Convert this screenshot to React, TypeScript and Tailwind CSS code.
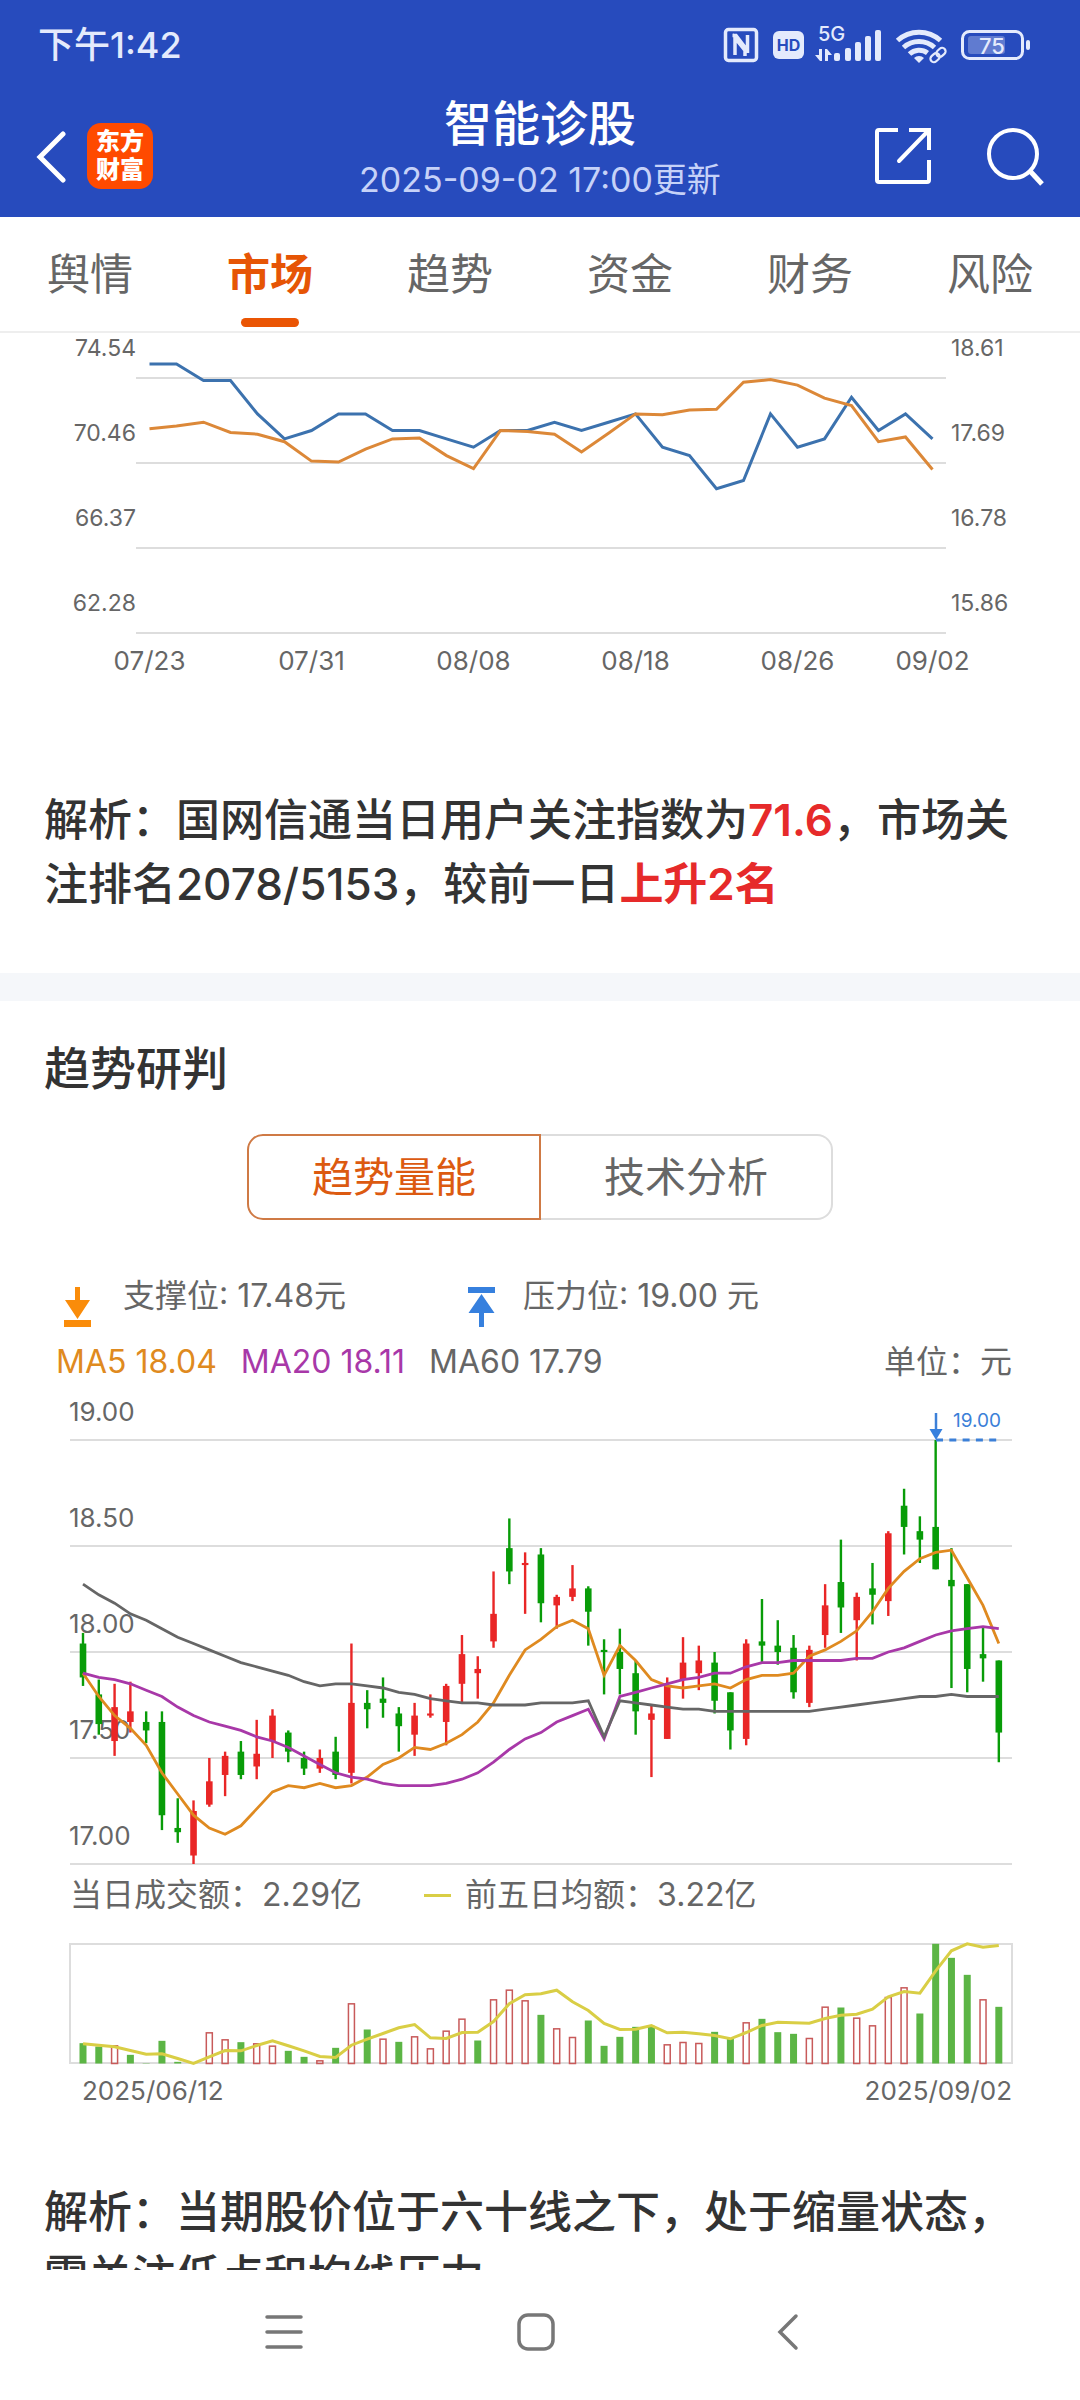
import type { ReactNode } from 'react';

const tabs = ['舆情', '市场', '趋势', '资金', '财务', '风险'];

// Attention index (left axis) against closing price (right axis)
const attention = [
  75.2, 75.2, 74.4, 74.4, 72.8, 71.6, 72, 72.8, 72.8, 72, 72, 71.6, 71.2, 72, 72, 72.4, 72, 72.4,
  72.8, 71.2, 70.8, 69.2, 69.6, 72.8, 71.2, 71.6, 73.6, 72, 72.8, 71.6,
];
const closes = [
  18.06, 18.09, 18.13, 18.02, 18, 17.92, 17.71, 17.7, 17.84, 17.95, 17.96, 17.77, 17.63, 18.04,
  18.03, 18, 17.81, 18.01, 18.22, 18.21, 18.26, 18.27, 18.56, 18.59, 18.53, 18.39, 18.31, 17.92,
  17.97, 17.62,
];
const attentionRows = [
  { y: 44, left: '74.54', right: '18.61' },
  { y: 129, left: '70.46', right: '17.69' },
  { y: 214, left: '66.37', right: '16.78' },
  { y: 299, left: '62.28', right: '15.86' },
];
const attentionDates = [
  { i: 0, label: '07/23' },
  { i: 6, label: '07/31' },
  { i: 12, label: '08/08' },
  { i: 18, label: '08/18' },
  { i: 24, label: '08/26' },
  { i: 29, label: '09/02' },
];

// direction (1 up, 0 down), high, body top, body bottom, low; prices in cents
const candles = [
  [0, 1809, 1804, 1788, 1784], [0, 1787, 1780, 1766, 1761], [1, 1785, 1774, 1758, 1751],
  [1, 1786, 1772, 1767, 1762], [0, 1772, 1767, 1763, 1757], [0, 1772, 1767, 1723, 1716],
  [0, 1731, 1717, 1715, 1710], [1, 1730, 1725, 1704, 1700], [1, 1750, 1739, 1728, 1727],
  [1, 1753, 1751, 1742, 1732], [0, 1758, 1753, 1742, 1740], [1, 1768, 1752, 1746, 1740],
  [1, 1773, 1770, 1758, 1750], [0, 1763, 1762, 1753, 1748], [0, 1753, 1750, 1745, 1742],
  [1, 1754, 1750, 1745, 1743], [0, 1760, 1753, 1742, 1740], [1, 1804, 1776, 1743, 1738],
  [0, 1782, 1776, 1773, 1764], [0, 1788, 1778, 1776, 1769], [0, 1774, 1771, 1765, 1753],
  [1, 1776, 1770, 1761, 1751], [1, 1780, 1771, 1770, 1769], [1, 1785, 1784, 1767, 1756],
  [1, 1808, 1799, 1785, 1776], [1, 1798, 1792, 1790, 1778], [1, 1838, 1818, 1805, 1802],
  [0, 1863, 1849, 1838, 1832], [1, 1847, 1842, 1841, 1818], [0, 1849, 1846, 1823, 1814],
  [1, 1827, 1826, 1822, 1811], [1, 1841, 1830, 1826, 1824], [0, 1831, 1830, 1819, 1803],
  [0, 1806, 1801, 1800, 1780], [0, 1811, 1800, 1792, 1780], [0, 1796, 1790, 1772, 1761],
  [1, 1775, 1771, 1768, 1741], [1, 1788, 1784, 1759, 1759], [1, 1807, 1795, 1787, 1778],
  [1, 1803, 1796, 1790, 1782], [0, 1800, 1795, 1777, 1771], [0, 1781, 1781, 1763, 1754],
  [1, 1806, 1804, 1759, 1756], [0, 1825, 1805, 1803, 1795], [0, 1815, 1803, 1800, 1794],
  [0, 1808, 1802, 1781, 1778], [1, 1803, 1801, 1776, 1774], [1, 1832, 1822, 1808, 1802],
  [0, 1853, 1833, 1821, 1809], [1, 1828, 1826, 1815, 1796], [0, 1842, 1830, 1827, 1813],
  [1, 1857, 1856, 1824, 1817], [0, 1877, 1869, 1859, 1846], [0, 1864, 1857, 1853, 1842],
  [0, 1900, 1859, 1839, 1839], [0, 1849, 1834, 1831, 1783], [0, 1832, 1832, 1792, 1781],
  [0, 1812, 1799, 1797, 1786], [0, 1796, 1796, 1762, 1748],
];
const ma5 = [
  1790, 1779, 1770, 1764, 1756, 1743, 1733, 1723, 1717, 1714, 1718, 1726, 1734, 1737, 1736, 1738,
  1736, 1737, 1741, 1747, 1750, 1755, 1754, 1757, 1761, 1767, 1776, 1789, 1801, 1806, 1812, 1815,
  1811, 1789, 1803, 1796, 1787, 1784, 1783, 1784, 1785, 1783, 1787, 1789, 1789, 1790, 1798, 1801,
  1805, 1810, 1819, 1830, 1838, 1844, 1847, 1848, 1835, 1822, 1804,
];
const ma20 = [
  1790, 1788, 1787, 1785, 1782, 1779, 1774, 1770, 1767, 1765, 1763, 1760, 1758, 1755, 1751, 1747,
  1743, 1741, 1740, 1738, 1737, 1737, 1737, 1738, 1740, 1743, 1748, 1754, 1759, 1762, 1767, 1770,
  1773, 1759, 1779, 1781, 1783, 1785, 1787, 1788, 1790, 1790, 1793, 1795, 1795, 1796, 1796, 1796,
  1796, 1797, 1797, 1800, 1802, 1805, 1808, 1810, 1811, 1812, 1811,
];
const ma60 = [
  1832, 1827, 1823, 1818, 1815, 1811, 1807, 1804, 1801, 1798, 1795, 1793, 1791, 1789, 1786, 1784,
  1785, 1785, 1784, 1783, 1781, 1780, 1778, 1777, 1776, 1776, 1775, 1775, 1775, 1776, 1776, 1776,
  1777, 1760, 1777, 1776, 1775, 1774, 1773, 1773, 1772, 1772, 1772, 1772, 1772, 1772, 1772, 1773,
  1774, 1775, 1776, 1777, 1778, 1779, 1779, 1780, 1779, 1779, 1779,
];

// direction, turnover scaled so that 359 fills the frame
const volumes = [
  [0, 61], [0, 51], [1, 53], [0, 26], [0, 1], [0, 68], [0, 5], [1, 0], [1, 92], [1, 71],
  [0, 64], [1, 59], [1, 52], [0, 38], [0, 20], [1, 8], [0, 47], [1, 179], [0, 102], [1, 73],
  [0, 65], [1, 80], [1, 44], [1, 97], [1, 133], [0, 69], [1, 191], [1, 220], [1, 188], [0, 146],
  [1, 104], [1, 78], [0, 129], [0, 53], [0, 80], [0, 110], [0, 113], [1, 56], [1, 63], [1, 60],
  [0, 95], [0, 74], [1, 122], [0, 134], [0, 94], [0, 89], [1, 75], [1, 169], [0, 168], [1, 136],
  [1, 113], [1, 198], [1, 227], [0, 150], [0, 359], [0, 317], [0, 266], [1, 191], [0, 170],
];
const volumeAvg = [
  59, 55, 50, 39, 28, 29, 15, 0, 20, 39, 38, 54, 68, 53, 38, 21, 18, 55, 73, 90, 107, 117, 77, 75,
  93, 94, 126, 179, 206, 209, 220, 185, 159, 120, 102, 103, 114, 92, 94, 89, 84, 74, 93, 114, 124,
  122, 121, 135, 145, 148, 163, 200, 216, 211, 278, 338, 359, 349, 354,
];

const dayX = (i: number) => 83 + i * 15.79;
const priceY = (cents: number) => 44 + (1900 - cents) * 2.12;
const toPoints = (values: number[], x: (i: number) => number, y: (v: number) => number) =>
  values.map((v, i) => `${x(i).toFixed(1)},${y(v).toFixed(1)}`).join(' ');

function StatusIcons() {
  return (
    <svg viewBox="720 20 316 50" className="h-[50px] w-[316px]" fill="#e4eafc" aria-hidden="true">
      {/* NFC */}
      <rect x="725.5" y="29.5" width="31" height="31" rx="3" fill="none" stroke="#e4eafc" strokeWidth="3.5" />
      <path d="M735 55V38l10 12.500V56M732.500 35.500h3.500l10 13M747.500 35v18" fill="none" stroke="#e4eafc" strokeWidth="3.5" />
      {/* HD */}
      <rect x="773" y="31" width="31" height="28" rx="6" />
      <text x="788.5" y="51" textAnchor="middle" className="text-[16px] font-bold" fill="#274bbd">HD</text>
      {/* Mobile signal */}
      <text x="818" y="41" className="text-[20px] font-medium">5G</text>
      <path d="M819 49h3v12h-2l-5-6h4zM825 49h2l5 6h-4v6h-3z" />
      <rect x="834" y="53" width="6" height="8" rx="2" />
      <rect x="845" y="48" width="6" height="13" rx="2" />
      <rect x="855" y="42" width="6" height="19" rx="2" />
      <rect x="865" y="36" width="6" height="25" rx="2" />
      <rect x="875" y="30" width="6" height="31" rx="2" />
      {/* Wi-Fi */}
      <g fill="none" stroke="#e4eafc" strokeWidth="5">
        <path d="M897.500 40.500a32 32 0 0 1 43 0" />
        <path d="M903.500 47.500a23 23 0 0 1 31 0" />
        <path d="M909.500 54a14 14 0 0 1 18 -1" />
      </g>
      <path d="M914 58a7 7 0 0 1 10 0l-5 5z" />
      <g transform="rotate(-42 938 55)" fill="none" stroke="#e4eafc" strokeWidth="2.2">
        <rect x="929" y="51.500" width="10" height="7" rx="3.500" />
        <rect x="937" y="51.500" width="10" height="7" rx="3.500" />
      </g>
      {/* Battery */}
      <rect x="962.500" y="31.500" width="60" height="27" rx="7" fill="none" stroke="#e4eafc" strokeWidth="3" />
      <rect x="968" y="36" width="37" height="18" rx="3" opacity="0.3" />
      <rect x="1026" y="40" width="4" height="10" rx="2" />
      <text x="992" y="54" textAnchor="middle" className="text-[22px] font-medium">75</text>
    </svg>
  );
}

function IconButton({ label, children }: { label: string; children: ReactNode }) {
  return (
    <button type="button" aria-label={label} className="flex items-center justify-center">
      {children}
    </button>
  );
}

function Header() {
  return (
    <header className="shrink-0 bg-[#274bbd] text-white">
      <div className="flex h-[90px] items-center justify-between pl-[38px] pr-[44px]">
        <span className="text-[36px] leading-[44px] font-medium text-[#e4eafc]">下午1:42</span>
        <StatusIcons />
      </div>
      <div className="grid h-[127px] grid-cols-[1fr_auto_1fr] items-center px-[35px]">
        <div className="flex items-center gap-[20px] pt-[4px]">
          <IconButton label="返回">
            <svg viewBox="0 0 32 54" className="h-[54px] w-[32px]" fill="none" stroke="white" strokeWidth="5" strokeLinecap="round">
              <path d="M28 5L5 28L28 51" />
            </svg>
          </IconButton>
          <div className="flex h-[66px] w-[66px] flex-col items-center justify-center rounded-[14px] bg-[#ff4a00] text-[24px] leading-[28px] font-black">
            <span>东方</span>
            <span>财富</span>
          </div>
        </div>
        <div className="pb-[5px] text-center">
          <h1 className="text-[48px] leading-[58px] font-medium">智能诊股</h1>
          <p className="text-[34px] leading-[54px] text-[#c6d2f8]">2025-09-02 17:00更新</p>
        </div>
        <div className="flex items-center justify-end gap-[52px] pt-[4px]">
          <IconButton label="分享">
            <svg viewBox="0 0 60 60" className="h-[60px] w-[60px]" fill="none" stroke="white" strokeWidth="4">
              <path d="M25 4H6a2 2 0 0 0-2 2V54a2 2 0 0 0 2 2H54a2 2 0 0 0 2-2V34M36 4H56V24" />
              <path d="M56 4L26 35" strokeLinecap="round" />
            </svg>
          </IconButton>
          <IconButton label="搜索">
            <svg viewBox="0 0 60 60" className="h-[60px] w-[60px]" fill="none" stroke="white" strokeWidth="4">
              <circle cx="28" cy="28" r="24" />
              <path d="M45 45L57 58" strokeWidth="5" />
            </svg>
          </IconButton>
        </div>
      </div>
    </header>
  );
}

function TabBar() {
  return (
    <nav className="grid h-[116px] shrink-0 grid-cols-6 border-b-2 border-[#eeeeee]">
      {tabs.map((tab) => (
        <button
          key={tab}
          type="button"
          className={
            tab === '市场'
              ? 'relative text-[43px] leading-[64px] font-bold text-[#e65505]'
              : 'relative text-[43px] leading-[64px] text-[#666666]'
          }
        >
          {tab}
          {tab === '市场' && (
            <span className="absolute bottom-[4px] left-1/2 h-[9px] w-[58px] -translate-x-1/2 rounded-full bg-[#ea5504]" />
          )}
        </button>
      ))}
    </nav>
  );
}

function AttentionChart() {
  const x = (i: number) => 149.5 + i * 27;
  return (
    <svg viewBox="0 0 1080 360" className="block w-full" fill="none">
      {attentionRows.map((row) => (
        <g key={row.left} className="text-[23px]" fill="#666666">
          <rect x="136" y={row.y} width="810" height="2" fill="#dddddd" />
          <text x="136" y={row.y - 21} textAnchor="end">{row.left}</text>
          <text x="951" y={row.y - 21}>{row.right}</text>
        </g>
      ))}
      {attentionDates.map((d) => (
        <text key={d.label} x={x(d.i)} y="337" textAnchor="middle" className="text-[26px]" fill="#666666">
          {d.label}
        </text>
      ))}
      <polyline points={toPoints(attention, x, (v) => 44.7 + (74.54 - v) * 20.8)} stroke="#3c72ae" strokeWidth="3" />
      <polyline points={toPoints(closes, x, (v) => 44.7 + (18.61 - v) * 92.7)} stroke="#dc8838" strokeWidth="3" />
    </svg>
  );
}

function CandleChart() {
  return (
    <svg viewBox="0 0 1080 475" className="block w-full" fill="none">
      {[1900, 1850, 1800, 1750, 1700].map((p) => (
        <g key={p}>
          <rect x="70" y={priceY(p) - 1} width="942" height="2" fill="#dddddd" />
          <text x="69" y={priceY(p) - 19} className="text-[26px]" fill="#666666">
            {(p / 100).toFixed(2)}
          </text>
        </g>
      ))}
      {candles.map(([up, high, top, bottom, low], i) => (
        <g key={i} fill={up ? '#e92626' : '#089c08'}>
          <rect x={dayX(i) - 1.2} y={priceY(high)} width="2.4" height={priceY(low) - priceY(high)} />
          <rect x={dayX(i) - 3.3} y={priceY(top)} width="6.6" height={Math.max(priceY(bottom) - priceY(top), 2)} />
        </g>
      ))}
      <g strokeWidth="2.8">
        <polyline points={toPoints(ma5, dayX, priceY)} stroke="#df8a20" />
        <polyline points={toPoints(ma20, dayX, priceY)} stroke="#a838a8" />
        <polyline points={toPoints(ma60, dayX, priceY)} stroke="#666666" />
      </g>
      {/* Resistance marker */}
      <path d="M936 17V36" stroke="#3c80d8" strokeWidth="2.5" />
      <path d="M929.500 33h13L936 44z" fill="#3680de" />
      <path d="M936 44H998" stroke="#3c80d8" strokeWidth="3" strokeDasharray="7 6.300" />
      <text x="953" y="31" className="text-[19px]" fill="#3c80d8">19.00</text>
    </svg>
  );
}

function VolumeChart() {
  return (
    <svg viewBox="0 0 1080 170" className="block w-full" fill="none">
      <rect x="70" y="6" width="942" height="119" stroke="#dddddd" strokeWidth="2" />
      {volumes.map(([up, v], i) =>
        up ? (
          <rect key={i} x={dayX(i) - 3} y={125.5 - v / 3} width="6" height={v / 3} stroke="#c85a5a" strokeWidth="1.5" />
        ) : (
          <rect key={i} x={dayX(i) - 3.5} y={125.5 - v / 3} width="7" height={v / 3} fill="#5cb545" />
        ),
      )}
      <polyline points={toPoints(volumeAvg, dayX, (v) => 125.5 - v / 3)} stroke="#d9ce45" strokeWidth="3" />
      <g className="text-[26px]" fill="#666666">
        <text x="82" y="162">2025/06/12</text>
        <text x="1012" y="162" textAnchor="end">2025/09/02</text>
      </g>
    </svg>
  );
}

function Analysis({ children }: { children: ReactNode }) {
  return <p className="px-[44px] text-[44px] leading-[64px] font-medium text-[#333333]">{children}</p>;
}

function TrendSection() {
  return (
    <section className="pt-[35px]">
      <h2 className="px-[44px] text-[46px] leading-[64px] font-medium text-[#333333]">趋势研判</h2>

      <div className="mx-auto mt-[34px] flex h-[86px] w-[586px] text-[41px] leading-[60px]">
        <button type="button" className="flex-1 rounded-l-[16px] border-2 border-[#cf7a45] text-[#dc5a10]">
          趋势量能
        </button>
        <button type="button" className="flex-1 rounded-r-[16px] border-2 border-l-0 border-[#dddddd] text-[#666666]">
          技术分析
        </button>
      </div>

      <div className="mt-[52px] grid grid-cols-[404px_1fr] pl-[64px] text-[32px] leading-[48px] text-[#666666]">
        <div className="flex gap-[32px]">
          <svg viewBox="0 0 27 40" className="mt-[15px] h-[40px] w-[27px]" fill="#fa8c0a">
            <path d="M11 0h5v13h10L13.500 32L1 13h10zM0 33h27v7H0z" />
          </svg>
          <span>支撑位: 17.48元</span>
        </div>
        <div className="flex gap-[28px]">
          <svg viewBox="0 0 27 40" className="mt-[15px] h-[40px] w-[27px]" fill="#3680de">
            <path d="M0 0h27v6H0zM13.500 7L26.500 26H16v14h-5V26H0.500z" />
          </svg>
          <span>压力位: 19.00 元</span>
        </div>
      </div>

      <div className="mt-[11px] flex items-center gap-[24px] pl-[56px] pr-[68px] text-[32px] leading-[48px]">
        <span className="text-[#df8a20]">MA5 18.04</span>
        <span className="text-[#a838a8]">MA20 18.11</span>
        <span className="text-[#666666]">MA60 17.79</span>
        <span className="ml-auto text-[#666666]">单位：元</span>
      </div>

      <div className="mt-[10px]">
        <CandleChart />
      </div>

      <div className="flex items-center pl-[70px] text-[32px] leading-[48px] text-[#666666]">
        <span>当日成交额：2.29亿</span>
        <span className="mr-[14px] ml-[62px] h-[3px] w-[27px] bg-[#d9ce45]" />
        <span>前五日均额：3.22亿</span>
      </div>
      <div className="mt-[19px]">
        <VolumeChart />
      </div>

      <div className="mt-[72px]">
        <Analysis>解析：当期股价位于六十线之下，处于缩量状态，需关注低点和均线压力</Analysis>
      </div>
    </section>
  );
}

function SystemNav() {
  return (
    <nav className="grid h-[130px] shrink-0 grid-cols-3 pr-[166px] pb-[6px] pl-[158px]">
      <IconButton label="最近任务">
        <svg viewBox="0 0 38 38" className="h-[38px] w-[38px]" stroke="#777777" strokeWidth="3.5" strokeLinecap="round">
          <path d="M2 4H36M2 19H36M2 34H36" />
        </svg>
      </IconButton>
      <IconButton label="主屏幕">
        <svg viewBox="0 0 38 38" className="h-[38px] w-[38px]" fill="none" stroke="#777777" strokeWidth="3.5">
          <rect x="2" y="2" width="34" height="34" rx="9" />
        </svg>
      </IconButton>
      <IconButton label="后退">
        <svg viewBox="0 0 38 38" className="h-[38px] w-[38px]" fill="none" stroke="#777777" strokeWidth="3.5" strokeLinecap="round">
          <path d="M27 3L11 19L27 35" />
        </svg>
      </IconButton>
    </nav>
  );
}

export default function App() {
  return (
    <div className="flex h-screen flex-col bg-white font-['Inter','Noto_Sans_CJK_SC',sans-serif]" lang="zh-CN">
      <Header />
      <TabBar />
      <main className="min-h-0 flex-1 overflow-hidden">
        <section className="pb-[57px]">
          <AttentionChart />
          <div className="mt-[95px]">
            <Analysis>
              解析：国网信通当日用户关注指数为<span className="font-semibold text-[#e62a2a]">71.6</span>，市场关注排名2078/5153，较前一日
              <span className="font-semibold text-[#e62a2a]">上升2名</span>
            </Analysis>
          </div>
        </section>
        <div className="h-[28px] bg-[#f5f7fa]" />
        <TrendSection />
      </main>
      <SystemNav />
    </div>
  );
}
